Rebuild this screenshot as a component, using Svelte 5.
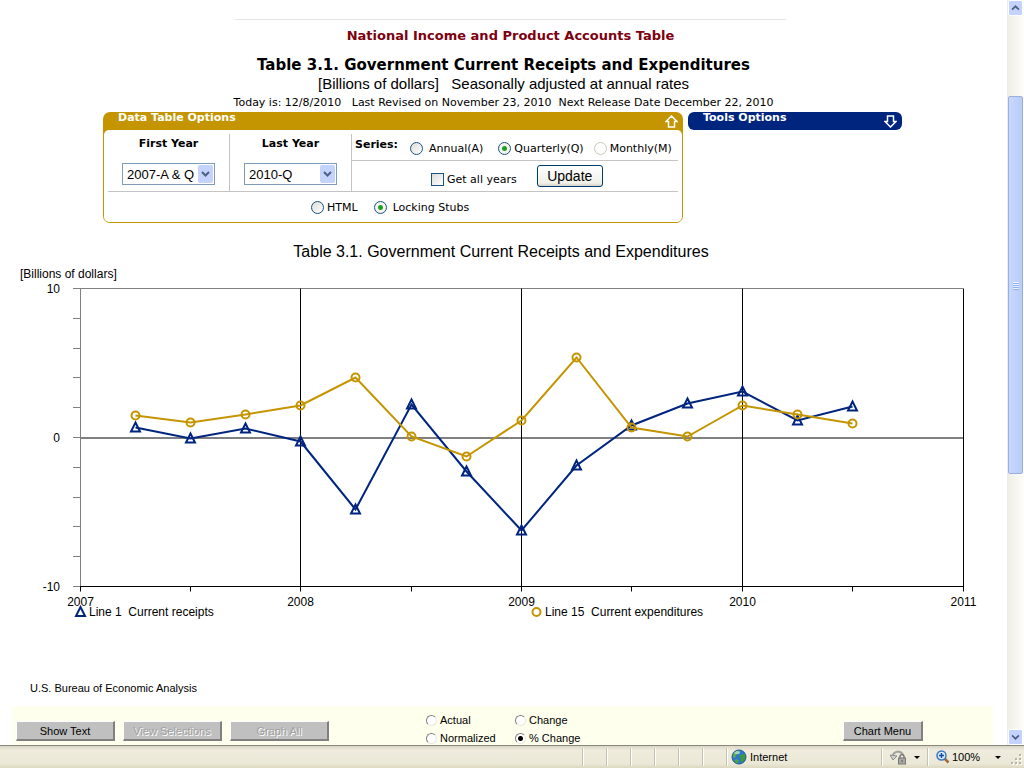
<script lang="ts">
  let firstYear = "2007-A & Q";
  let lastYear = "2010-Q";
  let series = "Q";
  let format = "stubs";
  let allYears = false;
  let mode = "pct";

  const seriesOptions = [
    { id: "A", label: "Annual(A)", disabled: false },
    { id: "Q", label: "Quarterly(Q)", disabled: false },
    { id: "M", label: "Monthly(M)", disabled: true },
  ];

  const modes = [
    { id: "actual", label: "Actual" },
    { id: "change", label: "Change" },
    { id: "normalized", label: "Normalized" },
    { id: "pct", label: "% Change" },
  ];

  // percent change by quarter, starting 2007 Q2
  const receipts = [0.7, -0.05, 0.6, -0.3, -4.85, 2.2, -2.3, -6.25, -1.9, 0.8, 2.25, 3.1, 1.15, 2.05];
  const expenditures = [1.5, 1, 1.55, 2.15, 4, 0.05, -1.3, 1.15, 5.35, 0.7, 0.05, 2.15, 1.55, 0.95];

  const years = [2007, 2008, 2009, 2010, 2011];
  const yTicks = [10, 8, 6, 4, 2, 0, -2, -4, -6, -8, -10];

  const left = 80;
  const yearWidth = 220.75;
  const zero = 199;
  const unit = 14.9;

  const xAt = (i: number) => Math.floor(left + ((i + 1) * yearWidth) / 4) + 0.5;
  const xYear = (y: number) => Math.floor(left + (y - 2007) * yearWidth) + 0.5;
  const yAt = (v: number) => Math.round(zero - v * unit) + 0.5;
  const line = (data: number[]) => data.map((v, i) => `${xAt(i)},${yAt(v)}`).join(" ");
  const triangle = (x: number, y: number) => `M${x} ${y - 5}L${x + 4.5} ${y + 4}H${x - 4.5}Z`;
</script>

<div class="window">
  <div class="viewport">
    <main>
      <header>
        <hr />
        <h2>National Income and Product Accounts Table</h2>
        <h1>Table 3.1. Government Current Receipts and Expenditures</h1>
        <p class="units">[Billions of dollars] &nbsp; Seasonally adjusted at annual rates</p>
        <p class="dates">
          Today is: 12/8/2010 &nbsp; Last Revised on November 23, 2010 &nbsp;Next Release Date December 22, 2010
        </p>
      </header>

      <div class="options">
        <form class="panel" on:submit|preventDefault>
          <div class="panel-head gold">
            <span>Data Table Options</span>
            <svg width="13" height="13" viewBox="0 0 13 13">
              <path d="M6.5 1L12 6.5H9.5V12H3.5V6.5H1Z" />
            </svg>
          </div>
          <div class="panel-body">
            <div class="row">
              <div class="year">
                <label for="first">First Year</label>
                <div class="select">
                  <select id="first" bind:value={firstYear}>
                    <option>2007-A & Q</option>
                  </select>
                  <svg width="15" height="18" viewBox="0 0 15 18"><path d="M4 7L7.5 10.5L11 7" /></svg>
                </div>
              </div>
              <div class="year">
                <label for="last">Last Year</label>
                <div class="select">
                  <select id="last" bind:value={lastYear}>
                    <option>2010-Q</option>
                  </select>
                  <svg width="15" height="18" viewBox="0 0 15 18"><path d="M4 7L7.5 10.5L11 7" /></svg>
                </div>
              </div>
              <div class="series">
                <div class="series-row">
                  <b>Series:</b>
                  {#each seriesOptions as s}
                    <label class:wide={s.id === "A"}>
                      <input type="radio" name="series" value={s.id} bind:group={series} disabled={s.disabled} />
                      {s.label}
                    </label>
                  {/each}
                </div>
                <div class="update-row">
                  <label><input type="checkbox" bind:checked={allYears} /> Get all years</label>
                  <button type="submit">Update</button>
                </div>
              </div>
            </div>
            <div class="format">
              <label><input type="radio" name="format" value="html" bind:group={format} /> HTML</label>
              <label class="wide"><input type="radio" name="format" value="stubs" bind:group={format} /> Locking Stubs</label>
            </div>
          </div>
        </form>

        <div class="panel-head navy">
          <span>Tools Options</span>
          <svg width="13" height="13" viewBox="0 0 13 13">
            <path d="M6.5 12L1 6.5H3.5V1H9.5V6.5H12Z" />
          </svg>
        </div>
      </div>

      <svg class="chart" viewBox="0 0 1007 386">
        <text class="title" x="501" y="19" text-anchor="middle">Table 3.1. Government Current Receipts and Expenditures</text>
        <text x="20" y="40">[Billions of dollars]</text>

        {#each yTicks as t}
          <line class="gray" x1="73" x2="80" y1={yAt(t)} y2={yAt(t)} />
          {#if t % 10 === 0}
            <text x="60" y={yAt(t) + 4} text-anchor="end">{t}</text>
          {/if}
        {/each}
        <line class="gray" x1="80" x2="963" y1={yAt(10)} y2={yAt(10)} />
        <line class="gray" x1="80.5" x2="80.5" y1={yAt(10)} y2={yAt(-10)} />
        <line class="gray zero" x1="80" x2="963" y1={zero + 1} y2={zero + 1} />
        <line class="black" x1="80" x2="964" y1={yAt(-10)} y2={yAt(-10)} />

        {#each years as y}
          <line class="black" x1={xYear(y)} x2={xYear(y)} y1={y === 2007 ? yAt(-10) : yAt(10)} y2={yAt(-10) + 5} />
          {#if y < 2011}
            <line class="black" x1={xYear(y + 0.5)} x2={xYear(y + 0.5)} y1={yAt(-10)} y2={yAt(-10) + 5} />
          {/if}
          <text x={xYear(y)} y="368" text-anchor="middle">{y}</text>
        {/each}

        <g class="receipts">
          <polyline points={line(receipts)} />
          {#each receipts as v, i}
            <path d={triangle(xAt(i), yAt(v))} />
          {/each}
          <path d={triangle(80.5, 374)} />
        </g>
        <g class="expenditures">
          <polyline points={line(expenditures)} />
          {#each expenditures as v, i}
            <circle cx={xAt(i)} cy={yAt(v)} r="4" />
          {/each}
          <circle cx="536.5" cy="374" r="4" />
        </g>
        <text x="89" y="378">Line 1 &nbsp;Current receipts</text>
        <text x="545" y="378">Line 15 &nbsp;Current expenditures</text>
      </svg>

      <p class="source">U.S. Bureau of Economic Analysis</p>

      <div class="toolbar">
        <button>Show Text</button>
        <button disabled>View Selections</button>
        <button disabled>Graph All</button>
        <div class="modes">
          {#each modes as m}
            <label><input type="radio" name="mode" value={m.id} bind:group={mode} /> {m.label}</label>
          {/each}
        </div>
        <button class="menu">Chart Menu</button>
      </div>
    </main>

    <div class="scrollbar">
      <svg class="arrow" width="15" height="16" viewBox="0 0 15 16"><path d="M3.5 10L7.5 6L11.5 10" /></svg>
      <div class="above"></div>
      <div class="thumb"><i></i><i></i><i></i><i></i></div>
      <div class="below"></div>
      <svg class="arrow" width="15" height="16" viewBox="0 0 15 16"><path d="M3.5 6L7.5 10L11.5 6" /></svg>
    </div>
  </div>

  <footer>
    {#each Array(6) as _}
      <span class="slot"></span>
    {/each}
    <span class="zone">
      <svg width="16" height="16" viewBox="0 0 16 16">
        <circle cx="8" cy="8" r="7" fill="#2f74d0" />
        <path d="M3 3Q7 0 9 2L8 5L5 6L4 9L1.5 8Q1 5 3 3Z" fill="#59b04b" />
        <path d="M9 6L14 5Q16 9 12 13L9 12L10 9L8 8Z" fill="#3c9a3b" />
        <path d="M5 10L8 11L7 14.5Q4 14 3 12Z" fill="#48a744" />
        <ellipse cx="6" cy="3.5" rx="3" ry="1.5" fill="#d6efff" opacity="0.6" />
        <circle cx="8" cy="8" r="7" fill="none" stroke="#245a94" />
      </svg>
      Internet
    </span>
    <span class="privacy">
      <svg width="17" height="16" viewBox="0 0 17 16">
        <path d="M2 9Q3 3 8 2.5Q12 3 13 6" fill="none" stroke="#a3a39f" stroke-width="2" />
        <path d="M0 6L7 7L3 11Z" fill="#d0d0cc" stroke="#8d8d89" />
        <path d="M10 9V7Q12 4 14 7V9" fill="none" stroke="#777" stroke-width="1.5" />
        <rect x="8.5" y="9" width="7" height="6" fill="#a9a9a4" stroke="#777" />
        <path d="M12 11V13" stroke="#555" />
      </svg>
      <i class="caret"></i>
    </span>
    <span class="zoom">
      <svg width="14" height="14" viewBox="0 0 14 14">
        <path d="M8.5 8.5L12.5 12.5" stroke="#a06a3c" stroke-width="2.5" />
        <circle cx="5.5" cy="5.5" r="4.5" fill="#d9ecff" stroke="#3b78c4" stroke-width="1.5" />
        <path d="M5.5 3V8M3 5.5H8" stroke="#164a9c" stroke-width="1.5" />
      </svg>
      100%
      <i class="caret"></i>
    </span>
    <svg class="grip" width="12" height="12" viewBox="0 0 12 12">
      {#each [[8, 0], [4, 4], [8, 4], [0, 8], [4, 8], [8, 8]] as [x, y]}
        <rect x={x + 1} y={y + 1} width="2" height="2" fill="#fff" />
        <rect {x} {y} width="2" height="2" fill="#b8b4a2" />
      {/each}
    </svg>
  </footer>
</div>

<style>
  :global(body) {
    margin: 0;
    background: #fff;
  }
  .window {
    display: flex;
    flex-direction: column;
    min-height: 100vh;
    color: #000;
    font: 11px "DejaVu Sans", Verdana, sans-serif;
  }
  .viewport {
    display: flex;
    flex: 1;
  }
  main {
    flex: 1;
    min-width: 0;
    display: flex;
    flex-direction: column;
  }
  header {
    text-align: center;
    padding-top: 19px;
  }
  hr {
    width: 551px;
    margin: 0 auto;
    border: 0;
    border-top: 1px solid #e4e4e4;
  }
  header hr,
  h2 {
    position: relative;
    left: 7px;
  }
  h2 {
    margin: 8px 0 0;
    font-size: 13px;
    line-height: 16px;
    color: #800010;
  }
  h1 {
    margin: 12px 0 0;
    font-size: 15px;
    line-height: 19px;
  }
  p {
    margin: 0;
  }
  .units {
    font: 15px/18px "Liberation Sans", Arial, sans-serif;
  }
  .dates {
    line-height: 19px;
  }

  .options {
    display: flex;
    justify-content: center;
    align-items: flex-start;
    gap: 5px;
    padding-right: 2px;
  }
  .panel {
    width: 580px;
    box-sizing: border-box;
    background: #c49500;
    border-radius: 7px;
    padding: 0 1px 1px;
  }
  .panel-head {
    display: flex;
    justify-content: space-between;
    height: 18px;
    padding: 0 4px 0 14px;
    color: #fff;
    font-weight: bold;
    line-height: 11px;
  }
  .panel-head svg {
    margin-top: 3px;
    fill: none;
    stroke: #fff;
    stroke-width: 1.5;
  }
  .navy {
    width: 214px;
    box-sizing: border-box;
    padding: 0 5px 0 15px;
    background: #00257f;
    border-radius: 6px;
  }
  .panel-body {
    background: #fff;
    border-radius: 5px;
    padding: 4px 4px 0;
  }
  .row {
    display: flex;
    border-bottom: 1px solid #c4c4c4;
  }
  .year {
    flex: none;
    width: 122px;
    box-sizing: border-box;
    border-right: 1px solid #c4c4c4;
    display: flex;
    flex-direction: column;
    align-items: center;
    gap: 11px;
    padding-top: 2px;
    height: 57px;
    font-weight: bold;
  }
  .year label {
    line-height: 16px;
  }
  .select {
    display: flex;
    width: 93px;
    box-sizing: border-box;
    height: 22px;
    border: 1px solid #7f9db9;
    padding: 1px;
  }
  select {
    flex: 1;
    min-width: 0;
    appearance: none;
    border: 0;
    padding: 0 0 0 3px;
    background: #fff;
    color: #000;
    font: 13px "Liberation Sans", Arial, sans-serif;
  }
  .select svg,
  .arrow {
    background: #c3d3fd;
    border-radius: 2px;
    fill: none;
    stroke: #4d6185;
    stroke-width: 2;
  }
  .series {
    flex: 1;
    min-width: 0;
  }
  .series-row,
  .update-row,
  .format {
    display: flex;
    align-items: center;
  }
  .series-row {
    height: 26px;
    padding-left: 3px;
    border-bottom: 1px solid #c4c4c4;
  }
  .series-row b {
    width: 55px;
    padding-bottom: 6px;
  }
  .series-row label {
    margin-right: 10px;
    padding-top: 2px;
  }
  .series-row label.wide {
    margin-right: 15px;
  }
  .series-row label:last-child {
    margin-right: 0;
  }
  label {
    display: flex;
    align-items: center;
    gap: 3px;
    white-space: nowrap;
  }
  label.wide {
    gap: 6px;
  }
  .update-row {
    height: 30px;
    padding-left: 79px;
    gap: 20px;
  }
  .update-row label {
    padding-top: 6px;
  }
  .update-row button {
    width: 66px;
    height: 22px;
    padding: 0;
    border: 1px solid #003c74;
    border-radius: 3px;
    background: linear-gradient(#fff, #f0f0ea 85%, #d6d0c5);
    color: #000;
    font: 14px "Liberation Sans", Arial, sans-serif;
  }
  .format {
    height: 30px;
    padding-left: 203px;
    gap: 16px;
  }
  input {
    flex: none;
    appearance: none;
    margin: 0;
    width: 13px;
    height: 13px;
    box-sizing: border-box;
    border: 1px solid #1c5180;
    background: linear-gradient(135deg, #dcdcd7, #fff);
  }
  input[type="radio"] {
    border-radius: 50%;
  }
  .panel input[type="radio"]:checked {
    background: radial-gradient(circle, #21a121 2px, #f3f3f0 3px);
  }
  input[type="checkbox"]:checked {
    background: #21a121;
  }
  input:disabled {
    border-color: #cac8bb;
    background: #fff;
  }

  .chart {
    display: block;
    width: 100%;
    margin-top: 15px;
    font: 12px "Liberation Sans", Arial, sans-serif;
  }
  .title {
    font-size: 16px;
  }
  .gray {
    stroke: #808080;
  }
  .zero {
    stroke-width: 2;
  }
  .black {
    stroke: #000;
  }
  .receipts,
  .expenditures {
    fill: none;
    stroke-width: 2;
  }
  .receipts {
    stroke: #00257f;
  }
  .expenditures {
    stroke: #c49500;
  }

  .source {
    margin: 57px 0 10px 30px;
    font: 11px/14px "Liberation Sans", Arial, sans-serif;
  }
  .toolbar {
    display: flex;
    align-items: flex-end;
    gap: 8px;
    margin: auto 14px 0 12px;
    padding: 7px 70px 4px 4px;
    background: #ffffee;
    font: 11px "Liberation Sans", Arial, sans-serif;
  }
  .toolbar button {
    width: 99px;
    height: 20px;
    padding: 0;
    border: 1px solid #fff;
    border-right: 2px solid #808080;
    border-bottom: 2px solid #808080;
    background: #c0c0c0;
    color: #000;
    font: inherit;
  }
  .toolbar button:disabled {
    color: #a0a0a0;
    text-shadow: 1px 1px #fff;
  }
  .toolbar .menu {
    width: 80px;
    margin-left: auto;
  }
  .modes {
    display: grid;
    grid-template-columns: 89px 80px;
    row-gap: 4px;
    margin: 0 0 -4px 89px;
  }
  .modes label {
    line-height: 14px;
  }
  .modes input {
    width: 11px;
    height: 11px;
    border: 1px solid #808080;
    border-right-color: #e8e8e0;
    border-bottom-color: #e8e8e0;
    background: #fff;
  }
  .modes input:checked {
    background: radial-gradient(circle, #000 2px, #fff 3px);
  }

  .scrollbar {
    flex: none;
    width: 17px;
    box-sizing: border-box;
    display: flex;
    flex-direction: column;
    align-items: center;
    background: linear-gradient(90deg, #eeede5, #fefefb);
  }
  .arrow {
    border: 1px solid #fff;
    box-sizing: border-box;
  }
  .above {
    flex: 80;
  }
  .below {
    flex: 255;
  }
  .thumb {
    flex: 377;
    width: 15px;
    box-sizing: border-box;
    border: 1px solid #98b0e0;
    border-radius: 2px;
    background: linear-gradient(90deg, #c9d8fc, #b9cbf8);
    display: flex;
    flex-direction: column;
    align-items: center;
    justify-content: center;
    gap: 1px;
  }
  .thumb i {
    width: 6px;
    height: 1px;
    background: #eef4fe;
    border-bottom: 1px solid #8cb0f8;
    margin-bottom: -1px;
  }

  footer {
    display: flex;
    align-items: center;
    justify-content: flex-end;
    height: 23px;
    box-sizing: border-box;
    border-top: 1px solid #8a887c;
    background: linear-gradient(#d9d6c6, #efecdd 20%, #ebe8d7 80%, #dcd8c0);
    font: 11px "Liberation Sans", Arial, sans-serif;
  }
  footer span {
    display: flex;
    align-items: center;
    height: 18px;
    box-sizing: border-box;
    border-left: 1px solid #c5c2b0;
    box-shadow: inset 1px 0 #fff;
  }
  .slot {
    width: 24px;
  }
  .zone {
    width: 155px;
    padding-left: 4px;
    gap: 3px;
  }
  .privacy {
    width: 46px;
    padding-left: 8px;
    gap: 7px;
  }
  .zoom {
    width: 84px;
    padding-left: 8px;
    gap: 2px;
  }
  .caret {
    border: 3px solid transparent;
    border-top-color: #000;
    border-bottom: 0;
  }
  .zoom .caret {
    margin-left: auto;
    margin-right: 10px;
  }
  .grip {
    margin: 6px 1px 0 0;
  }
</style>
